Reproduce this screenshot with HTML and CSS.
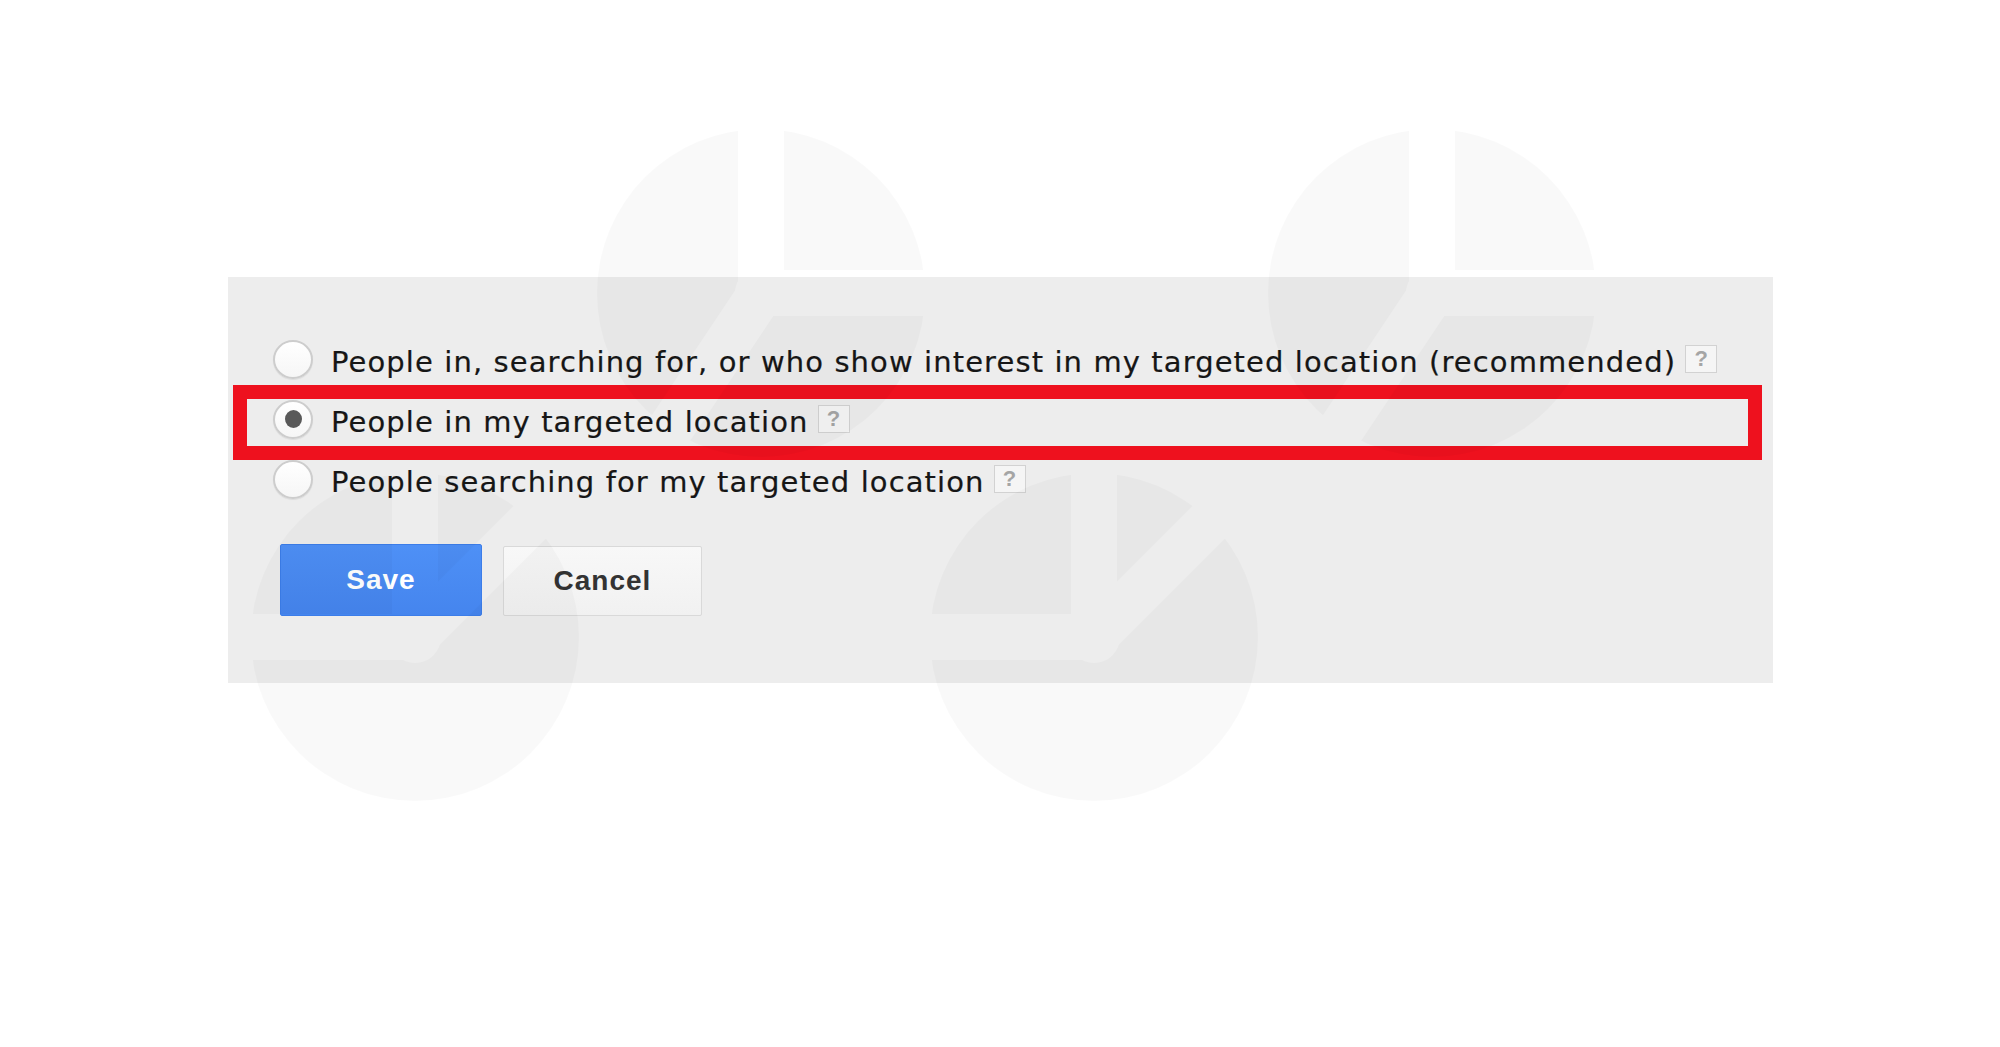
FILE: index.html
```html
<!DOCTYPE html>
<html lang="en">
<head>
    <meta charset="UTF-8">
    <meta name="viewport" content="width=device-width, initial-scale=1.0">
    <title>Location options</title>
    <link rel="stylesheet" href="styles.css">
</head>
<body>
    <svg class="watermark" width="2000" height="1047" viewBox="0 0 2000 1047">
        <defs>
            <mask id="cutTop" maskUnits="userSpaceOnUse" x="-200" y="-200" width="400" height="400">
                <rect x="-200" y="-200" width="400" height="400" fill="#fff"/>
                <path d="M0 0V-200M0 0H200M0 0L-110 165" stroke="#000" stroke-width="46"/>
                <circle r="26" fill="#000"/>
            </mask>
            <mask id="cutBottom" maskUnits="userSpaceOnUse" x="-200" y="-200" width="400" height="400">
                <rect x="-200" y="-200" width="400" height="400" fill="#fff"/>
                <path d="M0 0V-200M0 0H-200M0 0L140 -140" stroke="#000" stroke-width="46"/>
                <circle r="26" fill="#000"/>
            </mask>
        </defs>
        <g fill="#000" fill-opacity="0.022">
            <g transform="translate(761 293)"><circle r="164" mask="url(#cutTop)"/></g>
            <g transform="translate(1432 293)"><circle r="164" mask="url(#cutTop)"/></g>
            <g transform="translate(415 637)"><circle r="164" mask="url(#cutBottom)"/></g>
            <g transform="translate(1094 637)"><circle r="164" mask="url(#cutBottom)"/></g>
        </g>
    </svg>

    <div class="panel">
        <div class="highlight"></div>

        <div class="options">
            <label class="option">
                <span class="radio"></span>
                <span class="option-text">People in, searching for, or who show interest in my targeted location (recommended)</span>
                <span class="help">?</span>
            </label>
            <label class="option">
                <span class="radio checked"></span>
                <span class="option-text">People in my targeted location</span>
                <span class="help">?</span>
            </label>
            <label class="option">
                <span class="radio"></span>
                <span class="option-text">People searching for my targeted location</span>
                <span class="help">?</span>
            </label>
        </div>

        <div class="actions">
            <button class="btn btn-save">Save</button>
            <button class="btn btn-cancel">Cancel</button>
        </div>
    </div>
</body>
</html>
```

FILE: styles.css
```css
body {
    margin: 0;
    padding: 277px 0 0 228px;
    background: #fff;
    font-family: "Liberation Sans", Arial, sans-serif;
    color: #161616;
}

.watermark {
    position: absolute;
    top: 0;
    left: 0;
    pointer-events: none;
    z-index: 2;
}

.panel {
    position: relative;
    width: 1545px;
    box-sizing: border-box;
    padding: 52px 0 67px 45px;
    background: #ededed;
}

/* red annotation frame round the chosen option */
.highlight {
    position: absolute;
    left: 5px;
    top: 108px;
    width: 1529px;
    height: 75px;
    box-sizing: border-box;
    border: 14px solid #ee111e;
}

.options {
    display: flex;
    flex-direction: column;
}

.option {
    display: flex;
    align-items: center;
    height: 60px;
}

.radio {
    width: 40px;
    height: 39px;
    box-sizing: border-box;
    border: 2px solid #cdcdcd;
    border-radius: 50%;
    background: linear-gradient(#ffffff, #f6f6f6);
    box-shadow: 0 1px 1px rgba(0, 0, 0, 0.08);
    margin-right: 18px;
    display: flex;
    align-items: center;
    justify-content: center;
    flex-shrink: 0;
}

.radio.checked::after {
    content: "";
    width: 17px;
    height: 18px;
    border-radius: 50%;
    background: #595959;
}

.option-text {
    font-family: "DejaVu Sans", "Liberation Sans", sans-serif;
    font-size: 29px;
    letter-spacing: 1.1px;
    padding-top: 6px;
    white-space: nowrap;
    -webkit-text-stroke: 0.2px #161616;
}

.help {
    margin-left: 9px;
    width: 32px;
    height: 28px;
    box-sizing: border-box;
    border: 1px solid #d2d2d2;
    background: #f5f5f5;
    color: #a5a5a5;
    font-size: 22px;
    font-weight: bold;
    display: flex;
    align-items: center;
    justify-content: center;
}

.actions {
    display: flex;
    align-items: flex-end;
    gap: 21px;
    margin: 35px 0 0 7px;
}

.btn {
    font-family: "Liberation Sans", Arial, sans-serif;
    font-size: 28px;
    font-weight: bold;
    letter-spacing: 1px;
    border-radius: 2px;
    cursor: pointer;
    padding: 0;
}

.btn-save {
    width: 202px;
    height: 72px;
    background: linear-gradient(#4e90f6, #4585ee);
    border: 1px solid #3c7de9;
    color: #fff;
}

.btn-cancel {
    width: 199px;
    height: 70px;
    background: linear-gradient(#f8f8f8, #f1f1f1);
    border: 1px solid #d9d9d9;
    color: #333;
}
```
